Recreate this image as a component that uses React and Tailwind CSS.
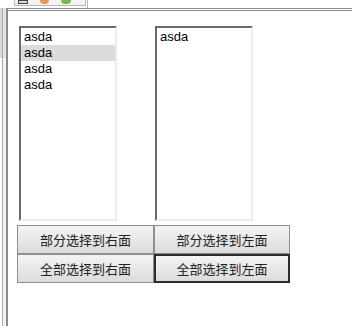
import React from "react";

const leftItems = ["asda", "asda", "asda", "asda"];
const rightItems = ["asda"];

const ListBox = ({ items, selected }) => (
  <div className="w-[98px] h-[195px] bg-white border-2 border-t-[#6a6a6a] border-l-[#6a6a6a] border-r-[#ececec] border-b-[#ececec] pt-[1px] overflow-hidden">
    {items.map((it, i) => (
      <div
        key={i}
        className={`h-[16px] leading-[16px] pl-[3px] text-[13px] text-black ${
          i === selected ? "bg-[#dcdcdc]" : ""
        }`}
      >
        {it}
      </div>
    ))}
  </div>
);

const Btn = ({ label, focused, wide }) => (
  <button
    type="button"
    className={`${wide ? "w-[137px]" : "w-[136px]"} h-[29px] flex items-center justify-center text-[13px] text-[#222] bg-gradient-to-b from-[#f4f4f4] to-[#dcdcdc] ${
      focused ? "border-2 border-[#2b2b2b]" : "border border-[#8e8e8e]"
    }`}
    style={{ fontFamily: '"Noto Sans CJK SC", sans-serif' }}
  >
    {label}
  </button>
);

export default function App() {
  return (
    <div
      className="w-[352px] h-[326px] bg-white flex flex-col overflow-hidden"
      style={{ fontFamily: '"Liberation Sans", Arial, sans-serif' }}
    >
      {/* browser chrome strip */}
      <div className="h-[8px] flex bg-white">
        <div className="w-[14px]" />
        <div className="w-[72px] h-[6px] border-x border-b border-[#b8b8b8] bg-[#f3f3f3] flex items-start gap-[12px] px-[3px]">
          <div className="w-[10px] h-[4px] border border-[#444] bg-[#d8d8d8]" />
          <div className="w-[9px] h-[4px] bg-[#e9954a] rounded-b-full" />
          <div className="w-[10px] h-[4px] bg-[#7fb84e] rounded-b-full" />
        </div>
        <div className="w-[1px]" />
        <div className="w-[1px] h-[8px] bg-[#b8b8b8]" />
        <div className="flex-1" />
      </div>
      <div className="flex flex-1">
        {/* left frame */}
        <div className="w-[8px] flex flex-col bg-white">
          <div className="h-[50px] flex">
            <div className="w-[2px] bg-[#d8d8d8]" />
            <div className="w-[1px] bg-[#a8a8a8]" />
            <div className="w-[3px] bg-[#e4e4e4]" />
            <div className="w-[2px] bg-[#8a8a8a]" />
          </div>
          <div className="flex-1 flex">
            <div className="w-[2px]" />
            <div className="w-[1px] bg-[#a8a8a8]" />
            <div className="w-[3px] bg-[#f4f4f4]" />
            <div className="w-[2px] bg-[#8a8a8a]" />
          </div>
        </div>
        <div className="flex-1 flex flex-col border-t-[3px] border-double border-[#8a8a8a]">
          <div className="pl-[9px] pt-[15px] flex flex-col">
            <div className="flex pl-[2px] gap-[38px]">
              <ListBox items={leftItems} selected={1} />
              <ListBox items={rightItems} selected={-1} />
            </div>
            <div className="mt-[4px] flex flex-col">
              <div className="flex">
                <Btn label="部分选择到右面" wide />
                <Btn label="部分选择到左面" />
              </div>
              <div className="flex">
                <Btn label="全部选择到右面" wide />
                <Btn label="全部选择到左面" focused />
              </div>
            </div>
          </div>
        </div>
      </div>
    </div>
  );
}
